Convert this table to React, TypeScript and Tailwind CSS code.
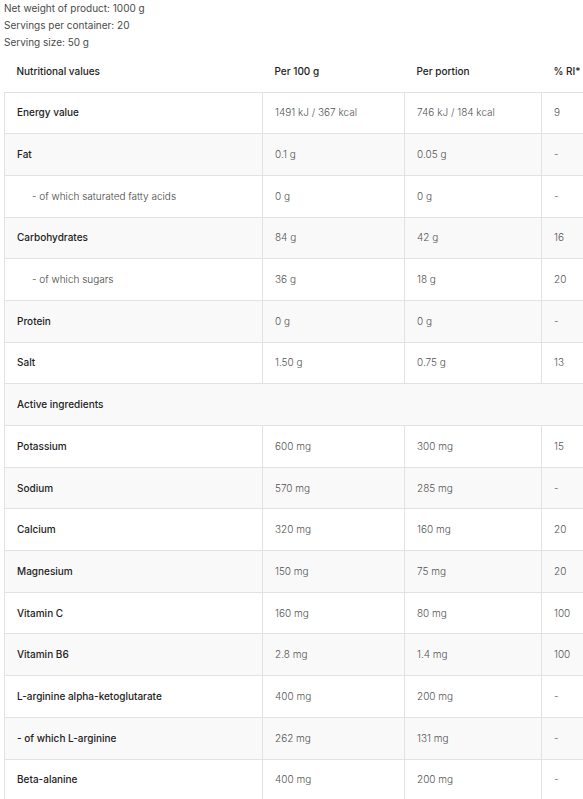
const rows: { label: string; p100?: string; portion?: string; ri?: string; indent?: boolean; full?: boolean; strong?: boolean }[] = [
  { label: "Energy value", p100: "1491 kJ / 367 kcal", portion: "746 kJ / 184 kcal", ri: "9" },
  { label: "Fat", p100: "0.1 g", portion: "0.05 g", ri: "-" },
  { label: "- of which saturated fatty acids", p100: "0 g", portion: "0 g", ri: "-", indent: true },
  { label: "Carbohydrates", p100: "84 g", portion: "42 g", ri: "16" },
  { label: "- of which sugars", p100: "36 g", portion: "18 g", ri: "20", indent: true },
  { label: "Protein", p100: "0 g", portion: "0 g", ri: "-" },
  { label: "Salt", p100: "1.50 g", portion: "0.75 g", ri: "13" },
  { label: "Active ingredients", full: true },
  { label: "Potassium", p100: "600 mg", portion: "300 mg", ri: "15" },
  { label: "Sodium", p100: "570 mg", portion: "285 mg", ri: "-" },
  { label: "Calcium", p100: "320 mg", portion: "160 mg", ri: "20" },
  { label: "Magnesium", p100: "150 mg", portion: "75 mg", ri: "20" },
  { label: "Vitamin C", p100: "160 mg", portion: "80 mg", ri: "100" },
  { label: "Vitamin B6", p100: "2.8 mg", portion: "1.4 mg", ri: "100" },
  { label: "L-arginine alpha-ketoglutarate", p100: "400 mg", portion: "200 mg", ri: "-" },
  { label: "- of which L-arginine", p100: "262 mg", portion: "131 mg", ri: "-" },
  { label: "Beta-alanine", p100: "400 mg", portion: "200 mg", ri: "-" },
];

export default function App() {
  return (
    <div className="h-[799px] w-[583px] overflow-hidden bg-white pl-1 font-['Inter','Noto_Sans',sans-serif] text-[10px]">
      <div className="leading-[17px] text-[#4a4a4a]">
        <p>Net weight of product: 1000 g</p>
        <p>Servings per container: 20</p>
        <p>Serving size: 50 g</p>
      </div>
      <table className="w-[680px] table-fixed border-collapse">
        <colgroup>
          <col className="w-[258px]" />
          <col className="w-[142px]" />
          <col className="w-[137px]" />
          <col className="w-[143px]" />
        </colgroup>
        <thead>
          <tr className="h-[41px] border-b border-[#e2e2e2] text-left font-medium text-[#222]">
            <th className="px-3 font-medium">Nutritional values</th>
            <th className="px-3 font-medium">Per 100 g</th>
            <th className="px-3 font-medium">Per portion</th>
            <th className="px-3 font-medium">% RI*</th>
          </tr>
        </thead>
        <tbody>
          {rows.map((r, i) => (
            <tr key={r.label} className={`h-[41.7px] ${i % 2 === 1 ? "bg-[#f9f9f9]" : "bg-white"}`}>
              {r.full ? (
                <td colSpan={4} className="border border-[#e2e2e2] px-3 font-medium text-[#222]">
                  {r.label}
                </td>
              ) : (
                <>
                  <td
                    className={`border border-[#e2e2e2] px-3 ${
                      r.indent ? "pl-[27px] font-light text-[#444]" : "font-medium text-[#222]"
                    }`}
                  >
                    {r.label}
                  </td>
                  <td className="border border-[#e2e2e2] px-3 font-light text-[#555]">{r.p100}</td>
                  <td className="border border-[#e2e2e2] px-3 font-light text-[#555]">{r.portion}</td>
                  <td className="border border-[#e2e2e2] px-3 font-light text-[#555]">{r.ri}</td>
                </>
              )}
            </tr>
          ))}
        </tbody>
      </table>
    </div>
  );
}
